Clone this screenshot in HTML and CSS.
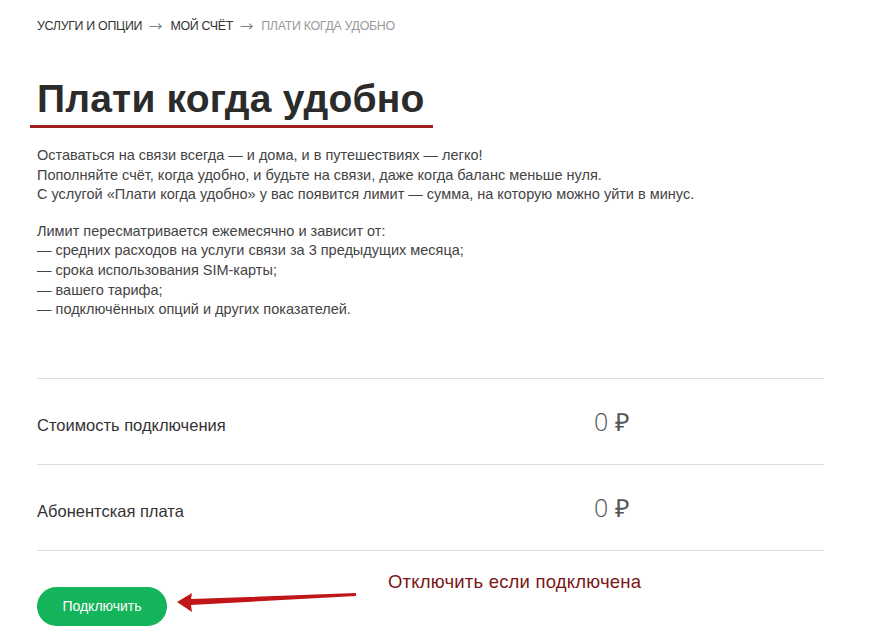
FILE: index.html
```html
<!DOCTYPE html>
<html lang="ru">
<head>
<meta charset="utf-8">
<link rel="stylesheet" href="styles.css">
</head>
<body>
<div class="page">
  <nav class="crumbs">
    <span class="crumb">Услуги и опции</span>
    <span class="sep">→</span>
    <span class="crumb">Мой счёт</span>
    <span class="sep">→</span>
    <span class="crumb current">Плати когда удобно</span>
  </nav>
  <h1 class="title">Плати когда удобно</h1>
  <div class="desc">
    <p>Оставаться на связи всегда — и дома, и в путешествиях — легко!<br>
    Пополняйте счёт, когда удобно, и будьте на связи, даже когда баланс меньше нуля.<br>
    С услугой «Плати когда удобно» у вас появится лимит — сумма, на которую можно уйти в минус.</p>
    <p>Лимит пересматривается ежемесячно и зависит от:<br>
    — средних расходов на услуги связи за 3 предыдущих месяца;<br>
    — срока использования SIM-карты;<br>
    — вашего тарифа;<br>
    — подключённых опций и других показателей.</p>
  </div>
  <div class="table">
    <div class="row">
      <span class="label">Стоимость подключения</span>
      <span class="value">0 ₽</span>
    </div>
    <div class="row">
      <span class="label">Абонентская плата</span>
      <span class="value">0 ₽</span>
    </div>
  </div>
  <div class="actions">
    <button class="btn">Подключить</button>
    <svg class="arrow" width="200" height="30" viewBox="0 0 200 30">
      <polygon points="1,20 16,11 15,17 180,11 180,14 15,23 16,30" fill="#c0161a"/>
    </svg>
    <span class="note">Отключить если подключена</span>
  </div>
</div>
</body>
</html>
```
FILE: styles.css
```css
* { box-sizing: border-box; }
html, body { margin: 0; padding: 0; background: #fff; }
body {
  font-family: "Liberation Sans", Arial, sans-serif;
  color: #333;
  width: 880px;
  height: 644px;
  overflow: hidden;
}
.page {
  padding: 18px 0 0 37px;
  width: 824px;
}
.crumbs {
  display: flex;
  align-items: center;
  font-size: 12.4px;
  text-transform: uppercase;
  color: #333;
  height: 16px;
  letter-spacing: -0.3px;
}
.sep {
  margin: 0 9px 0 7px;
  color: #666;
  font-size: 15px;
  font-family: "DejaVu Sans", sans-serif;
  font-weight: 300;
  transform: scaleX(1.1);
}
.crumb.current { color: #9a9a9a; }
.title {
  margin: 42px 0 0 -7px;
  padding: 0 8px 3px 7px;
  display: inline-block;
  font-size: 39px;
  font-weight: 700;
  line-height: 46px;
  color: #2b2b2b;
  border-bottom: 3px solid #a01e1e;
  letter-spacing: 0.2px;
}
.desc {
  margin-top: 18px;
  font-size: 14.5px;
  line-height: 19.6px;
  color: #444;
}
.desc p { margin: 0 0 17px 0; }
.table {
  margin-top: 58px;
  border-top: 1px solid #dcdcdc;
}
.row {
  display: flex;
  align-items: center;
  height: 86px;
  border-bottom: 1px solid #dcdcdc;
  padding-top: 8px;
}
.label {
  width: 557px;
  font-size: 16.5px;
  color: #333;
}
.value {
  font-size: 25px;
  font-weight: 300;
  color: #555;
  margin-top: -9px;
  font-family: "Open Sans", sans-serif;
}
.actions {
  position: relative;
  margin-top: 36px;
  display: flex;
  align-items: center;
}
.btn {
  width: 130px;
  height: 39px;
  border: none;
  border-radius: 20px;
  background: #14b45a;
  color: #fff;
  font-family: "Liberation Sans", Arial, sans-serif;
  font-size: 14px;
  padding: 0;
}
.arrow {
  position: absolute;
  left: 139px;
  top: -5px;
}
.note {
  position: absolute;
  left: 351px;
  top: -16px;
  font-size: 18.5px;
  color: #7a1616;
  letter-spacing: 0.2px;
}
```
